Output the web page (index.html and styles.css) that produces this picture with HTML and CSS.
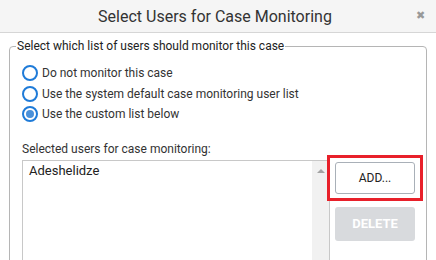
FILE: index.html
```html
<!DOCTYPE html>
<html lang="en">
<head>
    <meta charset="UTF-8">
    <title>Select Users for Case Monitoring</title>
    <link rel="stylesheet" href="styles.css">
</head>
<body>
    <div class="dialog">
        <div class="dialog-header">
            <h2>Select Users for Case Monitoring</h2>
            <span class="close">&#10006;</span>
        </div>
        <div class="dialog-body">
            <fieldset class="group">
                <legend>Select which list of users should monitor this case</legend>
                <label class="radio"><span class="dot"></span>Do not monitor this case</label>
                <label class="radio"><span class="dot"></span>Use the system default case monitoring user list</label>
                <label class="radio"><span class="dot checked"></span>Use the custom list below</label>

                <p class="list-label">Selected users for case monitoring:</p>
                <div class="list-row">
                    <div class="listbox">
                        <div class="items">
                            <div class="item">Adeshelidze</div>
                        </div>
                        <div class="scrollbar"><span class="arrow"></span></div>
                    </div>
                    <div class="actions">
                        <div class="highlight">
                            <button class="btn">ADD...</button>
                        </div>
                        <button class="btn disabled">DELETE</button>
                    </div>
                </div>
            </fieldset>
        </div>
    </div>
</body>
</html>
```

FILE: styles.css
```css
body {
    margin: 0;
    padding: 0;
    background: #ffffff;
    font-family: Roboto, "Liberation Sans", sans-serif;
    color: #222222;
    overflow: hidden;
}

.dialog-header {
    height: 32px;
    background: #f5f5f5;
    border-bottom: 1px solid #d6d6d6;
    display: flex;
    align-items: center;
    justify-content: center;
    position: relative;
}

.dialog-header h2 {
    margin: 0;
    font-size: 16px;
    font-weight: normal;
    color: #333333;
    margin-left: -6px;
}

.close {
    position: absolute;
    right: 11px;
    top: 9px;
    font-size: 11px;
    color: #999999;
}

.dialog-body {
    padding: 6px 9px 0 9px;
}

.group {
    margin: 0;
    border: 1px solid #b5b5b5;
    border-radius: 4px;
    padding: 10px 0 0 12px;
    height: 260px;
}

.group legend {
    font-size: 12px;
    color: #222222;
    padding: 0 1px;
    margin-left: -6px;
}

.radio {
    display: flex;
    align-items: center;
    gap: 4px;
    font-size: 12px;
    color: #333333;
    height: 20.5px;
}

.dot {
    width: 12px;
    height: 12px;
    border: 2px solid #1f7bd8;
    border-radius: 50%;
    display: flex;
    align-items: center;
    justify-content: center;
}

.dot.checked::after {
    content: "";
    width: 8px;
    height: 8px;
    border-radius: 50%;
    background: #4a90d9;
}

.list-label {
    font-size: 12px;
    color: #333333;
    margin: 17px 0 4px 0;
}

.list-row {
    display: flex;
    align-items: flex-start;
}

.listbox {
    width: 306px;
    height: 110px;
    border: 1px solid #c8c8c8;
    display: flex;
}

.items {
    flex: 1;
    padding: 2px 6px;
}

.item {
    font-size: 13px;
    color: #222222;
}

.scrollbar {
    width: 17px;
    background: #f1f1f1;
    display: flex;
    justify-content: center;
}

.arrow {
    margin-top: 8px;
    width: 0;
    height: 0;
    border-left: 4px solid transparent;
    border-right: 4px solid transparent;
    border-bottom: 4px solid #a3a3a3;
}

.actions {
    display: flex;
    flex-direction: column;
    margin-left: -3px;
    margin-top: -5px;
}

.highlight {
    border: 3px solid #e8202a;
    padding: 4px 5px;
}

.btn {
    width: 80px;
    height: 32px;
    font-family: Roboto, "Liberation Sans", sans-serif;
    font-size: 12px;
    background: #ffffff;
    color: #222222;
    border: 1px solid #a9b0b8;
    border-radius: 3px;
    padding: 0;
}

.btn.disabled {
    margin: 6px 0 0 8px;
    height: 34px;
    background: #d8dadd;
    border: none;
    color: #ffffff;
    font-weight: bold;
    font-size: 13px;
}
```
